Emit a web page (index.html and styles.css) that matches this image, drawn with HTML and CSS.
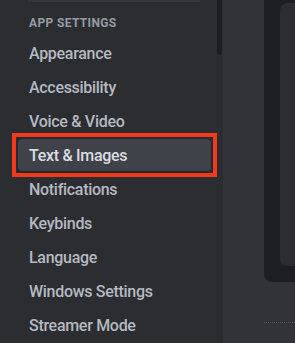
FILE: index.html
```html
<!DOCTYPE html>
<html lang="en">
<head>
    <meta charset="UTF-8">
    <meta name="viewport" content="width=device-width, initial-scale=1.0">
    <title>User Settings</title>
    <link rel="stylesheet" href="styles.css">
</head>
<body>
    <div class="layout">
        <aside class="sidebar">
            <nav class="side-nav">
                <div class="separator"></div>
                <h2 class="nav-header">App Settings</h2>
                <div class="nav-item">Appearance</div>
                <div class="nav-item">Accessibility</div>
                <div class="nav-item">Voice &amp; Video</div>
                <div class="highlight">
                    <div class="nav-item selected">Text &amp; Images</div>
                </div>
                <div class="nav-item">Notifications</div>
                <div class="nav-item">Keybinds</div>
                <div class="nav-item">Language</div>
                <div class="nav-item">Windows Settings</div>
                <div class="nav-item">Streamer Mode</div>
            </nav>
            <div class="scroll-thumb"></div>
        </aside>

        <main class="content">
            <div class="preview">
                <div class="preview-inner"></div>
            </div>
            <div class="divider"></div>
        </main>
    </div>
</body>
</html>
```

FILE: styles.css
```css
body {
    margin: 0;
    padding: 0;
    font-family: Roboto, "Noto Sans", sans-serif;
    background-color: #313338;
    overflow: hidden;
}

.layout {
    display: flex;
    height: 343px;
}

/* Sidebar */
.sidebar {
    position: relative;
    width: 223px;
    flex-shrink: 0;
    background-color: #2b2d31;
}

.side-nav {
    width: 193px;
    padding-left: 18px;
}

.separator {
    height: 2px;
    margin: 0 11px 0 10px;
    background-color: #35373c;
}

.nav-header {
    margin: 13px 0 6px;
    padding: 0 11px;
    font-size: 12px;
    line-height: 16px;
    font-weight: 700;
    letter-spacing: 0.03em;
    text-transform: uppercase;
    color: #949ba4;
}

.nav-item {
    height: 32px;
    margin-bottom: 2px;
    padding: 0 11px;
    display: flex;
    align-items: center;
    font-size: 16px;
    font-weight: 500;
    letter-spacing: -0.3px;
    color: #b5bac1;
    border-radius: 4px;
}

/* red annotation box round the selected row */
.highlight {
    margin: -6px -6px -4px;
    padding: 2px 2px 0;
    border: 4px solid #f2391c;
}

.nav-item.selected {
    background-color: #3f4248;
    color: #dbdee1;
    box-shadow: 0 0 3px rgba(0, 0, 0, 0.35);
}

.scroll-thumb {
    position: absolute;
    top: 0;
    right: 1px;
    width: 5px;
    height: 55px;
    background-color: #1d1e21;
    border-radius: 0 0 3px 3px;
}

/* Main content */
.content {
    flex: 1;
    padding-left: 41px;
}

.preview {
    height: 279px;
    padding: 3px 0 0 16px;
    background-color: #1e1f22;
    border-radius: 0 0 0 8px;
}

.preview-inner {
    height: 263px;
    background-color: #2b2d31;
    border-radius: 8px 0 0 8px;
}

.divider {
    margin-top: 40px;
    border-top: 1px dotted #4e5058;
}
```
